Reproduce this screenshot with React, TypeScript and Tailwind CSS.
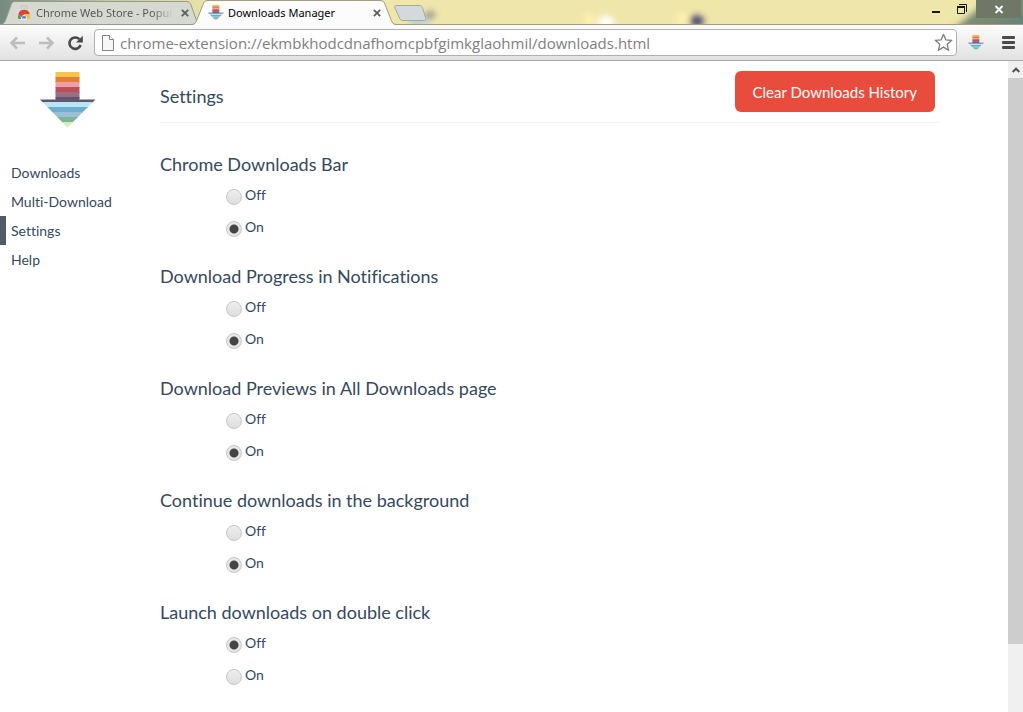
import { useId, useState } from "react";

const navItems = ["Downloads", "Multi-Download", "Settings", "Help"];

const settings = [
  { title: "Chrome Downloads Bar", value: "On" },
  { title: "Download Progress in Notifications", value: "On" },
  { title: "Download Previews in All Downloads page", value: "On" },
  { title: "Continue downloads in the background", value: "On" },
  { title: "Launch downloads on double click", value: "Off" },
];

const bands = [
  "#f6c34b",
  "#e07f35",
  "#eba0a9",
  "#bc505a",
  "#9b6d80",
  "#5f5770",
  "#b9e5f8",
  "#6dadd0",
  "#9bbfd6",
  "#80b296",
  "#d2efc0",
];

function ArrowLogo({ className }: { className: string }) {
  const clip = useId();
  return (
    <svg className={className} viewBox="0 0 56 56" aria-hidden="true">
      <clipPath id={clip}>
        <path d="M15.500 0h24v27.500H55.500L27.500 55.500 0 27.500h15.500z" />
      </clipPath>
      <g clipPath={`url(#${clip})`}>
        {bands.map((color, i) => (
          <rect key={color} x="0" y={i * 5} width="56" height="6" fill={color} />
        ))}
      </g>
    </svg>
  );
}

function StoreIcon() {
  return (
    <svg className="h-4 w-4 shrink-0" viewBox="0 0 16 16" aria-hidden="true">
      <path d="M5 5V1h6v4" fill="none" stroke="#c3c6c4" />
      <path d="M1 4h14l-1 11H2z" fill="#d9dcdb" />
      <path d="M2.400 14a5.700 5.700 0 0 1 0-4.500l3.600 4.500z" fill="#3faa54" />
      <path d="M2.300 9.300a6 6 0 0 1 11.600 0H8L5.500 13z" fill="#dc4437" />
      <path d="M8 9.300h6a6 6 0 0 1-.4 4.700H9.500z" fill="#f5c52c" />
      <path d="M5.600 14a2.600 2.600 0 1 1 4.800 0z" fill="#4a87e8" stroke="#fff" strokeWidth=".8" />
    </svg>
  );
}

function TabClose({ label }: { label: string }) {
  return (
    <button type="button" aria-label={label} className="shrink-0">
      <svg className="h-2 w-2" viewBox="0 0 8 8">
        <path d="M.8.8l6.400 6.400M7.200.8L.8 7.200" stroke="#5a5a5a" strokeWidth="1.700" />
      </svg>
    </button>
  );
}

function TabStrip() {
  return (
    <div className="relative flex h-[25px] items-stretch overflow-hidden bg-[#efe6a9]">
      <svg className="absolute inset-0 h-full w-full" viewBox="0 0 1023 25" preserveAspectRatio="none" aria-hidden="true">
        <defs>
          <filter id="soft" x="-50%" y="-50%" width="200%" height="200%">
            <feGaussianBlur stdDeviation="3" />
          </filter>
          <linearGradient id="left" x1="0" x2="1">
            <stop offset="0" stopColor="#758a80" />
            <stop offset=".5" stopColor="#c5cba5" />
            <stop offset="1" stopColor="#efe6a9" />
          </linearGradient>
        </defs>
        <rect width="220" height="25" fill="url(#left)" />
        <g filter="url(#soft)">
          <ellipse cx="418" cy="21" rx="10" ry="6" fill="#b3cfe2" />
          <ellipse cx="430" cy="15" rx="5" ry="4" fill="#8f8f92" />
          <ellipse cx="589" cy="20" rx="5" ry="6" fill="#fff5b0" />
          <ellipse cx="606" cy="22" rx="9" ry="6" fill="#ffffff" />
          <ellipse cx="682" cy="19" rx="5" ry="6" fill="#fff5b0" />
          <ellipse cx="697" cy="21" rx="7" ry="6" fill="#4d4a72" />
          <path d="M950 32L984 4V-8h50v40z" fill="#7c8a74" />
          <path d="M970 32l60-20v20z" fill="#66857d" />
        </g>
        <path d="M0 24.500h1023" stroke="#a29d80" />
      </svg>

      <div className="relative flex w-[198px] items-center pl-4 pr-[9px]">
        <svg className="absolute inset-0 h-full w-full" viewBox="0 0 198 25" preserveAspectRatio="none" aria-hidden="true">
          <path d="M1 24.500C4 23.500 5 22 6 19l5-14c1-3 2-3.500 4-3.500h171c3 0 4 1 5 3.500l7 19.500z" fill="#d6d9cf" stroke="#969a8c" />
        </svg>
        <div className="relative flex min-w-0 flex-1 items-center gap-1">
          <StoreIcon />
          <span className="w-[137px] overflow-hidden whitespace-nowrap bg-gradient-to-r from-[#505356] from-85% to-transparent bg-clip-text font-['Noto_Sans',sans-serif] text-[11px] leading-4 text-transparent">
            Chrome Web Store - Popular
          </span>
          <span className="ml-auto flex">
            <TabClose label="Close Chrome Web Store" />
          </span>
        </div>
      </div>

      <div className="relative -ml-1.5 flex w-[204px] items-center pl-4 pr-[15px]">
        <svg className="absolute inset-0 h-full w-full" viewBox="0 0 204 25" preserveAspectRatio="none" aria-hidden="true">
          <path d="M0 25c3-.5 4-2 5-5l6-15c1-3 2-4 5-4h172c3 0 4 1 5 4l6 15c1 3 2 4.500 5 5z" fill="#fcfcfc" />
          <path d="M0 24.500c3-.5 4-2 5-5l6-15c1-3 2-4 5-4h172c3 0 4 1 5 4l6 15c1 3 2 4.500 5 5" fill="none" stroke="#a29d80" />
        </svg>
        <div className="relative flex flex-1 items-center gap-1">
          <ArrowLogo className="h-4 w-4 shrink-0" />
          <span className="whitespace-nowrap font-['Noto_Sans',sans-serif] text-[11px] leading-4 text-black">
            Downloads Manager
          </span>
          <span className="ml-auto flex">
            <TabClose label="Close Downloads Manager" />
          </span>
        </div>
      </div>

      <button type="button" aria-label="New tab" className="relative -ml-0.5 mt-[5px] h-4 w-8 self-start">
        <svg className="h-4 w-8" viewBox="0 0 32 16">
          <path d="M2 .5h23c2 0 3 .5 3.500 2l3 10c.7 2-.2 3-2 3H9c-2 0-3-1-3.500-2.500L1 3C.4 1.300.8.500 2 .500z" fill="#d3dadd" stroke="#aaa895" />
        </svg>
      </button>

      <div className="relative ml-auto mr-0.5 flex h-[18px] items-stretch">
        <button type="button" aria-label="Minimize" className="w-[26px]">
          <svg className="h-[18px] w-[26px]" viewBox="0 0 26 18">
            <path d="M8 11h8v2H8z" fill="#16180f" />
          </svg>
        </button>
        <button type="button" aria-label="Restore" className="w-[26px]">
          <svg className="h-[18px] w-[26px]" viewBox="0 0 26 18">
            <path d="M9 4.500h7.500V12" fill="none" stroke="#16180f" />
            <path d="M7.500 7h7v6.500h-7z" fill="none" stroke="#16180f" />
            <path d="M7 6h8v2H7z" fill="#16180f" />
          </svg>
        </button>
        <button type="button" aria-label="Close window" className="w-[45px] bg-[#6f7866]">
          <svg className="h-[18px] w-[45px]" viewBox="0 0 45 18">
            <path d="M19.500 6l7 7M26.500 6l-7 7" stroke="#fff" strokeWidth="1.800" />
          </svg>
        </button>
      </div>
    </div>
  );
}

function Toolbar() {
  return (
    <div className="flex h-9 items-center border-b border-[#a5a5a5] bg-gradient-to-b from-[#fcfcfc] to-[#e2e2e2] pl-[9px] pr-2">
      <button type="button" aria-label="Back">
        <svg className="h-4 w-[17px]" viewBox="0 0 17 16" fill="none" stroke="#bdbdbd" strokeWidth="2.500">
          <path d="M16 8H2.500M8 2.500L2.500 8 8 13.500" />
        </svg>
      </button>
      <button type="button" aria-label="Forward" className="ml-3">
        <svg className="h-4 w-[17px]" viewBox="0 0 17 16" fill="none" stroke="#bdbdbd" strokeWidth="2.500">
          <path d="M1 8h13.500M9 2.500L14.500 8 9 13.500" />
        </svg>
      </button>
      <button type="button" aria-label="Reload" className="ml-3">
        <svg className="h-4 w-4" viewBox="0 0 16 16">
          <path d="M12.300 4.200A5.700 5.700 0 1 0 13.600 10" fill="none" stroke="#484848" strokeWidth="2.600" />
          <path d="M15.800.800v6.700H9z" fill="#484848" />
        </svg>
      </button>
      <div className="ml-[11px] flex h-[27px] flex-1 items-center rounded-sm border border-[#b0b0b0] bg-white pl-[7px] pr-[3px]">
        <svg className="h-4 w-3 shrink-0" viewBox="0 0 12 16" aria-hidden="true">
          <path d="M.5.500h7l4 4v11H.500z" fill="#f7f7f7" stroke="#858585" />
          <path d="M7.500.500v4h4" fill="#fff" stroke="#858585" />
        </svg>
        <input
          type="text"
          aria-label="Address"
          defaultValue="chrome-extension://ekmbkhodcdnafhomcpbfgimkglaohmil/downloads.html"
          className="ml-1.5 min-w-0 flex-1 bg-transparent text-[15px] leading-6 text-[#808080] outline-none"
        />
        <button type="button" aria-label="Bookmark this page">
          <svg className="h-[19px] w-[19px]" viewBox="0 0 19 19">
            <path
              d="M9.500 1.300l2.300 5.500 6 .5-4.600 4 1.400 6-5.100-3.200-5.100 3.200 1.400-6-4.600-4 6-.5z"
              fill="#fff"
              stroke="#7d7d7d"
              strokeWidth="1.300"
              strokeLinejoin="round"
            />
          </svg>
        </button>
      </div>
      <button type="button" aria-label="Downloads Manager extension" className="ml-[11px]">
        <ArrowLogo className="h-4 w-4" />
      </button>
      <button type="button" aria-label="Menu" className="ml-[18px]">
        <svg className="h-[13px] w-[13px]" viewBox="0 0 13 13" fill="#4a4a4a">
          <rect width="13" height="3" rx="1" />
          <rect y="5" width="13" height="3" rx="1" />
          <rect y="10" width="13" height="3" rx="1" />
        </svg>
      </button>
    </div>
  );
}

function Setting({ title, value }: { title: string; value: string }) {
  const [selected, setSelected] = useState(value);
  return (
    <fieldset>
      <legend className="mb-[3px] text-lg leading-6">{title}</legend>
      {["Off", "On"].map((option) => (
        <label key={option} className="ml-[66px] flex h-8 w-fit items-center gap-[3px] text-sm">
          <input
            type="radio"
            name={title}
            checked={selected === option}
            onChange={() => setSelected(option)}
            className="mt-1 h-4 w-4 appearance-none rounded-full border border-[#c6c6c6] bg-gradient-to-b from-[#eeeeee] to-[#dedede] checked:bg-[radial-gradient(circle,#444444_4px,#e6e6e6_5px)]"
          />
          {option}
        </label>
      ))}
    </fieldset>
  );
}

function Scrollbar() {
  return (
    <div className="flex flex-col bg-[#f0f0f0]">
      <button type="button" aria-label="Scroll up" className="flex h-[17px] shrink-0 items-center justify-center">
        <svg className="h-[6px] w-2" viewBox="0 0 8 6">
          <path d="M.7 5L4 1.700 7.300 5" fill="none" stroke="#505050" strokeWidth="2" />
        </svg>
      </button>
      <div className="flex-[25] bg-[#cdcdcd]" />
      <div className="flex-[3]" />
    </div>
  );
}

export default function App() {
  return (
    <div className="flex min-h-screen flex-col bg-white font-['Open_Sans',sans-serif]">
      <header>
        <TabStrip />
        <Toolbar />
      </header>

      <div className="grid flex-1 grid-cols-[160px_1fr_15px] font-['Lato',sans-serif] text-[#34495e] [font-variant-ligatures:none]">
        <aside className="pt-[11px]">
          <ArrowLogo className="ml-10 h-14 w-14" />
          <nav className="mt-[30px] text-sm">
            {navItems.map((item) => (
              <a
                key={item}
                href="#"
                className={
                  item === "Settings"
                    ? "flex h-[29px] items-center border-l-[6px] border-[#515c68] pl-[5px]"
                    : "flex h-[29px] items-center border-l-[6px] border-transparent pl-[5px]"
                }
              >
                {item}
              </a>
            ))}
          </nav>
        </aside>

        <main className="pr-[68px]">
          <div className="flex h-[62px] items-center justify-between border-b border-[#f2f2f2] py-2.5 pr-[5px]">
            <h1 className="mt-2 text-lg leading-6">Settings</h1>
            <button type="button" className="h-[41px] rounded-md bg-[#e74c3c] px-[18px] text-[15px] leading-5 text-white">
              Clear Downloads History
            </button>
          </div>
          <form className="mt-[29px] flex flex-col gap-[21px]">
            {settings.map((setting) => (
              <Setting key={setting.title} title={setting.title} value={setting.value} />
            ))}
          </form>
        </main>

        <Scrollbar />
      </div>
    </div>
  );
}
